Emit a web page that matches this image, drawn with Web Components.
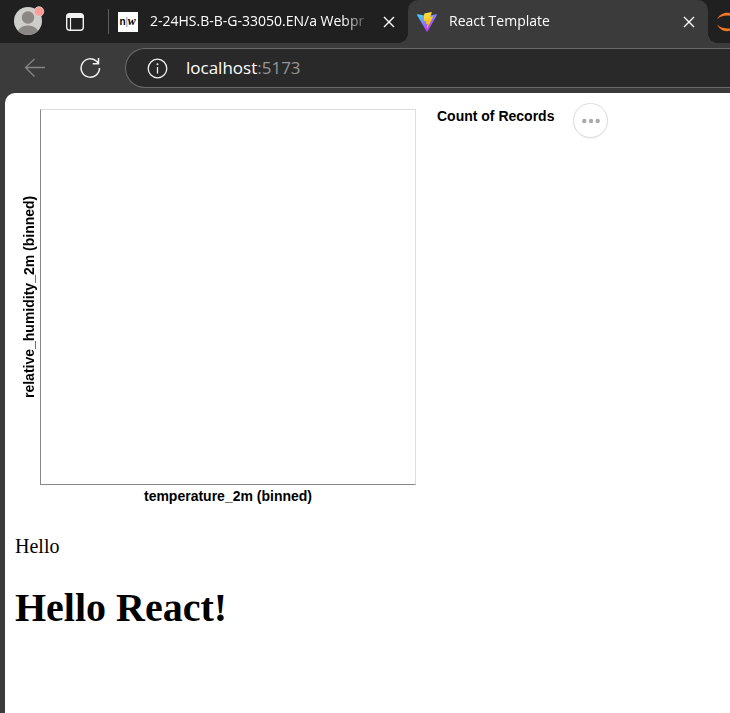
<!DOCTYPE html>
<html lang="en">
<head>
<meta charset="utf-8">
<title>React Template</title>
<style>
  html, body { height: 100%; margin: 0; }
  body { overflow: hidden; background: #3b3b3b; }
</style>
</head>
<body>
<browser-window></browser-window>

<template id="tpl-window">
  <style>
    :host { display: flex; flex-direction: column; height: 100%; background: #3b3b3b; font-family: "Open Sans", "Noto Sans", sans-serif; color: #fff; }
    web-page { flex: 1; margin-left: 5px; }
  </style>
  <tab-strip></tab-strip>
  <nav-bar host="localhost" port=":5173"></nav-bar>
  <web-page>
    <bin-chart x-title="temperature_2m (binned)" y-title="relative_humidity_2m (binned)" legend="Count of Records"></bin-chart>
    <hello-text></hello-text>
  </web-page>
</template>

<template id="tpl-strip">
  <style>
    :host { display: flex; height: 43px; background: #202020; overflow: hidden; flex: none; }
    .tools { display: flex; align-items: center; width: 108px; flex: none; box-sizing: border-box; padding-left: 13px; gap: 20px; }
    button { display: block; padding: 0; border: 0; background: none; line-height: 0; }
    .sep { width: 1px; height: 25px; margin-top: 9px; background: #5c5c5c; flex: none; }
    .first { width: 299px; }
    .active { width: 300px; }
    .last { width: 300px; }
    browser-tab { flex: none; }
  </style>
  <div class="tools">
    <button aria-label="Profile">
      <svg width="32" height="32" viewBox="0 0 32 32">
        <defs><clipPath id="c"><circle cx="15" cy="15" r="14"/></clipPath></defs>
        <circle cx="15" cy="15" r="14" fill="#cfcdca"/>
        <g clip-path="url(#c)" fill="#8a8784"><circle cx="15" cy="11.500" r="6.200"/><ellipse cx="15" cy="27" rx="10.500" ry="7.500"/></g>
        <circle cx="26" cy="5.500" r="4.800" fill="#ff9c95" stroke="#d9d5d2" stroke-width=".8"/>
      </svg>
    </button>
    <button aria-label="Tab actions">
      <svg width="20" height="20" viewBox="0 0 20 20">
        <rect x="1.700" y="1.700" width="16.600" height="16.600" rx="3" fill="none" stroke="#f2f2f2" stroke-width="1.400"/>
        <path d="M1.500 6V4.500a3 3 0 0 1 3-3h11a3 3 0 0 1 3 3V6z" fill="#f2f2f2"/>
        <path d="M5.500 6v12" stroke="#f2f2f2" stroke-width="1.200"/>
      </svg>
    </button>
  </div>
  <div class="sep"></div>
  <browser-tab class="first" title-text="2-24HS.B-B-G-33050.EN/a Webpr">
    <svg slot="icon" width="20" height="20" viewBox="0 0 20 20">
      <rect width="20" height="20" fill="#fff"/>
      <text x="1.500" y="13" font-family="Liberation Sans, sans-serif" font-weight="bold" font-size="10">n</text>
      <path d="M8.800 5v10" stroke="#777" stroke-width=".8"/>
      <text x="9.800" y="13" font-family="Liberation Serif, serif" font-weight="bold" font-style="italic" font-size="12">w</text>
    </svg>
  </browser-tab>
  <browser-tab class="active" active title-text="React Template">
    <svg slot="icon" width="20" height="20" viewBox="0 0 32 32">
      <defs>
        <linearGradient id="a" x1="0" y1=".1" x2=".6" y2=".9"><stop offset="0" stop-color="#41d1ff"/><stop offset="1" stop-color="#bd34fe"/></linearGradient>
        <linearGradient id="b" x1=".4" y1="0" x2=".6" y2="1"><stop offset="0" stop-color="#ffea83"/><stop offset=".1" stop-color="#ffdd35"/><stop offset="1" stop-color="#ffa800"/></linearGradient>
      </defs>
      <path d="M31.900 4.900 16.900 31.300a.9.9 0 0 1-1.600 0L.1 4.900A.9.900 0 0 1 1.100 3.600L16 6.200l14.900-2.600a.9.900 0 0 1 1 1.300z" fill="url(#a)"/>
      <path d="m23 .1-11 2.100a.4.400 0 0 0-.4.400l-.7 11.500c0 .3.200.5.500.4l3.100-.7c.3 0 .5.200.5.500l-.9 4.500c-.1.300.2.600.5.500l1.900-.6c.3-.1.600.2.500.5l-1.500 7c0 .5.500.7.800.3l9.300-18.600c.1-.3-.1-.6-.5-.6l-3.200.7c-.3 0-.6-.3-.5-.5L23.500.600c0-.3-.2-.6-.5-.5z" fill="url(#b)"/>
    </svg>
  </browser-tab>
  <browser-tab class="last" title-text="">
    <svg slot="icon" width="20" height="20" viewBox="0 0 20 20" fill="#f37726">
      <path d="M.2 7.400C2 3 6 .800 10 .800s8 2.200 9.800 6.600C17.500 4.700 14 3.600 10 3.600S2.500 4.700.2 7.400z"/>
      <path d="M.2 12.600C2 17 6 19.200 10 19.200s8-2.200 9.800-6.600c-2.300 2.700-5.800 3.800-9.800 3.800s-7.500-1.100-9.800-3.800z"/>
    </svg>
  </browser-tab>
</template>

<template id="tpl-tab">
  <style>
    :host { display: flex; align-items: center; box-sizing: border-box; height: 43px; padding: 0 9px; position: relative; }
    :host([active]) { background: #3b3b3b; border-radius: 10px 10px 0 0; }
    :host([active])::before, :host([active])::after { content: ""; position: absolute; bottom: 0; width: 10px; height: 10px; }
    :host([active])::before { left: -10px; background: radial-gradient(circle at 0 0, transparent 10px, #3b3b3b 10px); }
    :host([active])::after { right: -10px; background: radial-gradient(circle at 100% 0, transparent 10px, #3b3b3b 10px); }
    ::slotted(svg) { flex: none; }
    .title { flex: 1; min-width: 0; margin-left: 12px; padding-bottom: 2px; font-size: 14px; line-height: 22px; white-space: nowrap; overflow: hidden;
      -webkit-mask-image: linear-gradient(to left, transparent 0, #000 28px); mask-image: linear-gradient(to left, transparent 0, #000 28px); }
    button { flex: none; display: block; width: 20px; height: 20px; padding: 4px; margin-left: 8px; border: 0; background: none; line-height: 0; }
  </style>
  <slot name="icon"></slot>
  <span class="title"></span>
  <button aria-label="Close tab"><svg width="12" height="12" viewBox="0 0 12 12"><path d="M1 1l10 10M11 1L1 11" stroke="#fff" stroke-width="1.400"/></svg></button>
</template>

<template id="tpl-nav">
  <style>
    :host { display: flex; align-items: center; height: 50px; flex: none; overflow: hidden; }
    button { display: block; padding: 0; border: 0; background: none; line-height: 0; flex: none; }
    .back { margin-left: 24px; }
    .reload { margin-left: 34px; }
    .address { display: flex; align-items: center; flex: 1; box-sizing: border-box; height: 40px; margin: 0 -4px 0 24px; padding-left: 21px;
      border: 1px solid #6b6b6b; border-right: 0; border-radius: 20px 0 0 20px; background: #292929; }
    .url { margin-left: 18px; font-size: 17px; line-height: 24px; color: #fff; text-decoration: none; }
    .port { color: #969696; }
  </style>
  <button class="back" aria-label="Back"><svg width="22" height="20" viewBox="0 0 22 20" fill="none" stroke="#858585" stroke-width="1.300"><path d="M21 9.500H1.500M10.500 1L1.500 9.500l9 9"/></svg></button>
  <button class="reload" aria-label="Reload"><svg width="21" height="22" viewBox="0 0 21 22" fill="none" stroke="#f2f2f2" stroke-width="1.500"><path d="M19.500 11a9.200 9.200 0 1 1-2.600-6.400L18.300 6.500M18.500 1v5.800h-5.800"/></svg></button>
  <div class="address">
    <button aria-label="View site information"><svg width="21" height="21" viewBox="0 0 21 21" fill="none" stroke="#f2f2f2" stroke-width="1.300"><circle cx="10.500" cy="10.500" r="9.300"/><path d="M10.500 9v6.500"/><circle cx="10.500" cy="6.300" r=".4"/></svg></button>
    <a class="url" href="#"><span class="host"></span><span class="port"></span></a>
  </div>
</template>

<template id="tpl-page">
  <style>
    :host { display: block; background: #fff; color: #000; border-top-left-radius: 10px; padding: 10px; font-family: "Liberation Serif", "Times New Roman", serif; }
  </style>
  <slot></slot>
</template>

<template id="tpl-chart">
  <style>
    :host { display: flex; align-items: flex-start; font: bold 14px/16px "Liberation Sans", Arial, sans-serif; }
    .grid { display: grid; grid-template-columns: 25px minmax(0, 376px); margin-top: 6px; }
    .y { writing-mode: vertical-rl; transform: rotate(180deg); text-align: center; line-height: 16px; justify-self: end; margin-right: 3px; }
    .plot { aspect-ratio: 1; box-sizing: border-box; border: 1px solid #ddd; border-left-color: #888; border-bottom-color: #888; }
    .x { grid-column: 2; text-align: center; margin-top: 3px; }
    .legend { margin: 5px 0 0 21px; white-space: nowrap; }
    button { width: 35px; height: 35px; flex: none; box-sizing: border-box; margin-left: 19px; padding: 0; display: grid; place-items: center;
      border: 1px solid #ddd; border-radius: 50%; background: #fff; box-shadow: 0 1px 2px rgba(0,0,0,.06); }
  </style>
  <div class="grid">
    <div class="y"></div>
    <div class="plot"></div>
    <div class="x"></div>
  </div>
  <div class="legend"></div>
  <button aria-label="Chart actions"><svg width="18" height="6" viewBox="0 0 18 6" fill="#aaa"><circle cx="2.300" cy="3" r="2.200"/><circle cx="9" cy="3" r="2.200"/><circle cx="15.700" cy="3" r="2.200"/></svg></button>
</template>

<template id="tpl-hello">
  <style>
    :host { display: block; margin-top: 31px; font-size: 20px; line-height: 23px; }
    h1 { margin: 27px 0 0; font-size: 40px; line-height: 46px; }
  </style>
  <div>Hello</div>
  <h1>Hello React!</h1>
</template>

<script>
  class Base extends HTMLElement {
    constructor() {
      super();
      this.attachShadow({ mode: "open" }).append(
        document.getElementById(this.constructor.template).content.cloneNode(true));
    }
    put(selector, attribute) {
      this.shadowRoot.querySelector(selector).textContent = this.getAttribute(attribute) || "";
    }
  }
  customElements.define("hello-text", class extends Base { static template = "tpl-hello"; });
  customElements.define("bin-chart", class extends Base {
    static template = "tpl-chart";
    connectedCallback() { this.put(".x", "x-title"); this.put(".y", "y-title"); this.put(".legend", "legend"); }
  });
  customElements.define("web-page", class extends Base { static template = "tpl-page"; });
  customElements.define("nav-bar", class extends Base {
    static template = "tpl-nav";
    connectedCallback() { this.put(".host", "host"); this.put(".port", "port"); }
  });
  customElements.define("browser-tab", class extends Base {
    static template = "tpl-tab";
    connectedCallback() { this.put(".title", "title-text"); }
  });
  customElements.define("tab-strip", class extends Base { static template = "tpl-strip"; });
  customElements.define("browser-window", class extends Base { static template = "tpl-window"; });
</script>
</body>
</html>
